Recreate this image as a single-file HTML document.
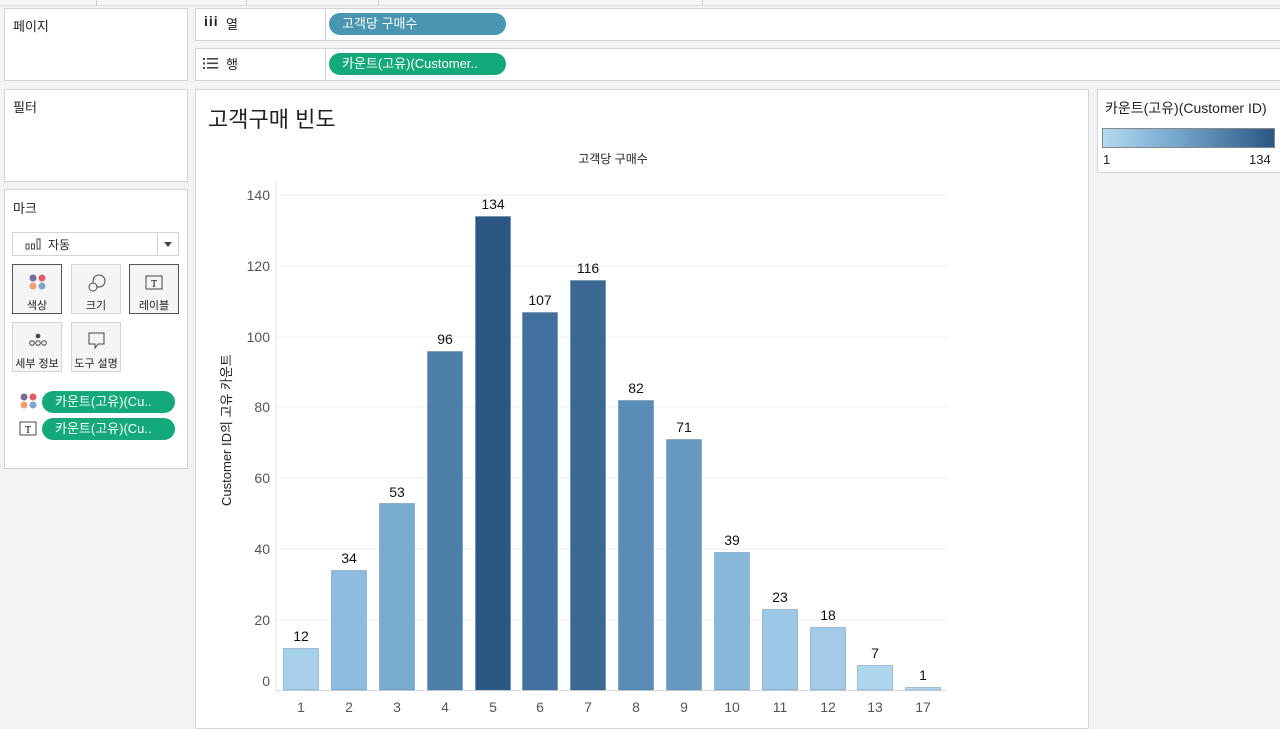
<!DOCTYPE html><html><head><meta charset="utf-8"><style>
body{margin:0;width:1280px;height:720px;overflow:hidden;background:#f3f3f3;font-family:"Liberation Sans","Noto Sans CJK KR",sans-serif;position:relative;color:#222}
.p{position:absolute;background:#fff;border:1px solid #d4d4d4;box-sizing:border-box}
.t{position:absolute;font-size:13px}
.pill{position:absolute;border-radius:11px;color:#fff;font-size:13px;line-height:22px;padding-left:13px;box-sizing:border-box;white-space:nowrap;overflow:hidden}
.g{background:#14a97a}.b{background:#4a96b2}
.btn{position:absolute;width:50px;height:50px;background:#f5f5f5;border:1px solid #d4d4d4;box-sizing:border-box;font-size:11px;text-align:center}
.btn.s{border:1px solid #555}
.btn span{position:absolute;left:0;right:0;top:32px}
</style></head><body>
<div style="position:absolute;left:0;top:0;width:1280px;height:5px;background:#f7f7f7;border-bottom:1px solid #ddd"></div>
<div style="position:absolute;left:96px;top:0;width:1px;height:5px;background:#ccc"></div>
<div style="position:absolute;left:246px;top:0;width:1px;height:5px;background:#ccc"></div>
<div style="position:absolute;left:378px;top:0;width:1px;height:5px;background:#ccc"></div>
<div style="position:absolute;left:702px;top:0;width:1px;height:5px;background:#ccc"></div>
<div class="p" style="left:4px;top:8px;width:184px;height:73px"></div><div class="t" style="left:13px;top:16px">페이지</div>
<div class="p" style="left:4px;top:89px;width:184px;height:93px"></div><div class="t" style="left:13px;top:97px">필터</div>
<div class="p" style="left:4px;top:189px;width:184px;height:280px"></div><div class="t" style="left:13px;top:198px">마크</div>
<div style="position:absolute;left:12px;top:232px;width:167px;height:24px;border:1px solid #d4d4d4;box-sizing:border-box;background:#fff"></div>
<svg style="position:absolute;left:25px;top:237px" width="18" height="14"><g fill="none" stroke="#444"><rect x="1" y="7" width="3" height="5"/><rect x="6.5" y="7" width="3" height="5"/><rect x="12" y="2" width="3" height="10"/></g></svg>
<div class="t" style="left:48px;top:236px;font-size:12px">자동</div>
<div style="position:absolute;left:157px;top:233px;width:1px;height:22px;background:#d4d4d4"></div>
<div style="position:absolute;left:164px;top:242px;border:4px solid transparent;border-top:5px solid #444"></div>
<div class="btn s" style="left:12px;top:264px"><svg style="position:absolute;left:16px;top:9px" width="18" height="18"><circle cx="4" cy="4" r="3.5" fill="#7a6a94"/><circle cx="13" cy="4" r="3.5" fill="#e45c6a"/><circle cx="4" cy="12" r="3.5" fill="#f0a070"/><circle cx="13" cy="12" r="3.5" fill="#7ea4d0"/></svg><span>색상</span></div>
<div class="btn" style="left:71px;top:264px"><svg style="position:absolute;left:15px;top:8px" width="20" height="20"><circle cx="12" cy="8" r="6" fill="none" stroke="#444"/><circle cx="6" cy="14" r="4" fill="#f5f5f5" stroke="#444"/></svg><span>크기</span></div>
<div class="btn s" style="left:129px;top:264px"><svg style="position:absolute;left:15px;top:10px" width="18" height="16"><rect x="1" y="1" width="16" height="13" fill="none" stroke="#444"/><text x="9" y="12" font-size="10" text-anchor="middle" font-family="Liberation Serif">T</text></svg><span>레이블</span></div>
<div class="btn" style="left:12px;top:322px"><svg style="position:absolute;left:15px;top:9px" width="20" height="16"><circle cx="10" cy="4" r="2.3" fill="#444"/><g fill="none" stroke="#444"><circle cx="4" cy="11" r="2.3"/><circle cx="10" cy="11" r="2.3"/><circle cx="16" cy="11" r="2.3"/></g></svg><span>세부 정보</span></div>
<div class="btn" style="left:71px;top:322px"><svg style="position:absolute;left:15px;top:8px" width="20" height="20"><path d="M2 2H17V13H11L8 17V13H2Z" fill="none" stroke="#444"/></svg><span>도구 설명</span></div>
<svg style="position:absolute;left:20px;top:393px" width="18" height="18"><circle cx="4" cy="4" r="3.5" fill="#7a6a94"/><circle cx="13" cy="4" r="3.5" fill="#e45c6a"/><circle cx="4" cy="12" r="3.5" fill="#f0a070"/><circle cx="13" cy="12" r="3.5" fill="#7ea4d0"/></svg>
<div class="pill g" style="left:42px;top:391px;width:133px">카운트(고유)(Cu..</div>
<svg style="position:absolute;left:19px;top:421px" width="18" height="16"><rect x="1" y="1" width="16" height="13" fill="none" stroke="#444"/><text x="9" y="12" font-size="10" text-anchor="middle" font-family="Liberation Serif">T</text></svg>
<div class="pill g" style="left:42px;top:418px;width:133px">카운트(고유)(Cu..</div>
<div class="p" style="left:195px;top:8px;width:1090px;height:33px"></div>
<div style="position:absolute;left:325px;top:8px;width:1px;height:33px;background:#d4d4d4"></div>
<div class="t" style="left:204px;top:13px;font-weight:bold;font-size:14px;letter-spacing:1px">iii</div><div class="t" style="left:226px;top:14px">열</div>
<div class="pill b" style="left:329px;top:13px;width:177px">고객당 구매수</div>
<div class="p" style="left:195px;top:48px;width:1090px;height:33px"></div>
<div style="position:absolute;left:325px;top:48px;width:1px;height:33px;background:#d4d4d4"></div>
<svg style="position:absolute;left:203px;top:57px" width="16" height="13"><g fill="#444"><rect x="0" y="1" width="2" height="2"/><rect x="0" y="5.5" width="2" height="2"/><rect x="0" y="10" width="2" height="2"/><rect x="4" y="1" width="11" height="1.6"/><rect x="4" y="5.5" width="11" height="1.6"/><rect x="4" y="10" width="11" height="1.6"/></g></svg>
<div class="t" style="left:226px;top:54px">행</div>
<div class="pill g" style="left:329px;top:53px;width:177px">카운트(고유)(Customer..</div>
<div class="p" style="left:195px;top:89px;width:894px;height:640px"></div>
<div class="p" style="left:1097px;top:89px;width:190px;height:84px"></div>
<div class="t" style="left:1105px;top:98px;font-size:14px">카운트(고유)(Customer ID)</div>
<div style="position:absolute;left:1102px;top:128px;width:173px;height:20px;box-sizing:border-box;border:1px solid #888;background:linear-gradient(90deg,#b4d9f0,#79aad0 40%,#2a5783)"></div>
<div class="t" style="left:1103px;top:152px">1</div><div class="t" style="left:1249px;top:152px">134</div>
<svg style="position:absolute;left:0;top:0" width="1280" height="720" font-family="Liberation Sans,Noto Sans CJK KR,sans-serif">
<text x="208" y="127" font-size="22" fill="#222">고객구매 빈도</text>
<text x="613" y="163" font-size="12" text-anchor="middle" fill="#222">고객당 구매수</text>
<text transform="translate(231,430) rotate(-90)" font-size="13" text-anchor="middle" fill="#222">Customer ID의 고유 카운트</text>
<g stroke="#ececec"><line x1="276" x2="946" y1="195" y2="195"/><line x1="276" x2="946" y1="266" y2="266"/><line x1="276" x2="946" y1="337" y2="337"/><line x1="276" x2="946" y1="407" y2="407"/><line x1="276" x2="946" y1="478" y2="478"/><line x1="276" x2="946" y1="549" y2="549"/><line x1="276" x2="946" y1="620" y2="620"/></g>
<line x1="276" x2="276" y1="180" y2="692" stroke="#e4e4e4"/>
<line x1="276" x2="946" y1="690.5" y2="690.5" stroke="#ddd"/>
<g font-size="14" fill="#555" text-anchor="end"><text x="270" y="200">140</text><text x="270" y="271">120</text><text x="270" y="342">100</text><text x="270" y="412">80</text><text x="270" y="483">60</text><text x="270" y="554">40</text><text x="270" y="625">20</text><text x="270" y="686">0</text></g>
<g stroke="#3d6a94" stroke-opacity="0.35">
<rect x="283.5" y="648.5" width="35" height="41.5" fill="#a6cfea"/>
<rect x="331.5" y="570.5" width="35" height="119.5" fill="#8ebce0"/>
<rect x="379.5" y="503.5" width="35" height="186.5" fill="#79aad0"/>
<rect x="427.5" y="351.5" width="35" height="338.5" fill="#4e7fab"/>
<rect x="475.5" y="216.5" width="35" height="473.5" fill="#2a5783"/>
<rect x="522.5" y="312.5" width="35" height="377.5" fill="#43719f"/>
<rect x="570.5" y="280.5" width="35" height="409.5" fill="#3a6893"/>
<rect x="618.5" y="400.5" width="35" height="289.5" fill="#5a8cb8"/>
<rect x="666.5" y="439.5" width="35" height="250.5" fill="#6899c3"/>
<rect x="714.5" y="552.5" width="35" height="137.5" fill="#88b7dc"/>
<rect x="762.5" y="609.5" width="35" height="80.5" fill="#9cc7e6"/>
<rect x="810.5" y="627.5" width="35" height="62.5" fill="#a2cbe8"/>
<rect x="857.5" y="665.5" width="35" height="24.5" fill="#aed5ee"/>
<rect x="905.5" y="687.5" width="35" height="2.5" fill="#b4d9f0"/>
</g>
<g font-size="14" fill="#111" text-anchor="middle">
<text x="301" y="641">12</text><text x="349" y="563">34</text><text x="397" y="497">53</text><text x="445" y="344">96</text><text x="493" y="209">134</text><text x="540" y="305">107</text><text x="588" y="273">116</text><text x="636" y="393">82</text><text x="684" y="432">71</text><text x="732" y="545">39</text><text x="780" y="602">23</text><text x="828" y="620">18</text><text x="875" y="658">7</text><text x="923" y="680">1</text>
</g>
<g font-size="14" fill="#555" text-anchor="middle">
<text x="301" y="712">1</text><text x="349" y="712">2</text><text x="397" y="712">3</text><text x="445" y="712">4</text><text x="493" y="712">5</text><text x="540" y="712">6</text><text x="588" y="712">7</text><text x="636" y="712">8</text><text x="684" y="712">9</text><text x="732" y="712">10</text><text x="780" y="712">11</text><text x="828" y="712">12</text><text x="875" y="712">13</text><text x="923" y="712">17</text>
</g>
</svg>
</body></html>
